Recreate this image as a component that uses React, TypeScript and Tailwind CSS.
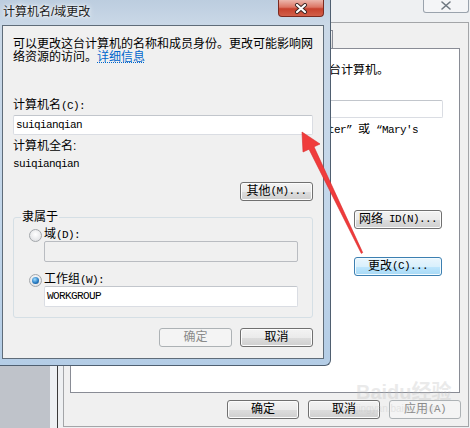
import React from 'react';

// latin runs in the dialog font look like SimSun half-width glyphs (6px per char)
const M = ({ children }: { children: React.ReactNode }) => (
    <span className="font-['Liberation_Mono',monospace] text-[11px] tracking-[-0.6px]">{children}</span>
);

type BtnProps = { children?: React.ReactNode; className?: string; kind?: 'normal' | 'disabled' | 'hot' };

const Btn = ({ children, className = '', kind = 'normal' }: BtnProps) => {
    const look =
        kind === 'disabled'
            ? 'border-[#adb2b5] bg-[#f4f4f4] text-[#8a8a8a]'
            : kind === 'hot'
            ? 'border-[#3c7fb1] bg-[linear-gradient(#eaf6fd_0%,#d9f0fc_50%,#bee6fd_51%,#a7d9f5_100%)] shadow-[inset_0_0_0_1px_#f2fbff] text-black'
            : 'border-[#707070] bg-[linear-gradient(#f3f3f3_0%,#ebebeb_50%,#dddddd_51%,#cfcfcf_100%)] shadow-[inset_0_0_0_1px_#fcfcfc] text-black';
    return (
        <div className={`flex h-[19px] items-center justify-center whitespace-nowrap rounded-[3px] border text-[12px] leading-[13px] ${look} ${className}`}>
            {children}
        </div>
    );
};

const Field = ({ children, className = '', disabled }: { children?: React.ReactNode; className?: string; disabled?: boolean }) => (
    <div
        className={`flex items-center rounded-[2px] border px-[2px] ${
            disabled ? 'border-[#b9bcc1] bg-[#f0f0f0]' : 'border-[#dadde3] border-t-[#c2c6cc] bg-white'
        } ${className}`}
    >
        {children}
    </div>
);

const Radio = ({ checked }: { checked?: boolean }) => (
    <span className="flex h-[13px] w-[13px] shrink-0 items-center justify-center rounded-full border border-[#a3a7ab] bg-[radial-gradient(circle_at_50%_40%,#ffffff,#d9dbde)]">
        {checked && (
            <span className="h-[7px] w-[7px] rounded-full bg-[radial-gradient(circle_at_40%_35%,#9fdcff,#2a7ec4_55%,#0c3f78)]" />
        )}
    </span>
);

const CloseX = ({ dark }: { dark?: boolean }) => (
    <svg width="14" height="11" viewBox="0 0 14 11">
        <path d="M3 2 L11 9 M11 2 L3 9" stroke={dark ? '#6e7780' : '#3a2522'} strokeWidth={dark ? 1.6 : 4} strokeLinecap="round" />
        {!dark && <path d="M3 2 L11 9 M11 2 L3 9" stroke="#ffffff" strokeWidth="2.2" strokeLinecap="round" />}
    </svg>
);

const Tab = ({ className = '' }: { className?: string }) => (
    <div className={`h-[18px] border border-b-0 border-l-0 border-[#898c95] bg-[linear-gradient(#f2f2f2,#dcdcdc)] ${className}`} />
);

const BackWindow = () => (
    <div className="absolute left-[50px] top-0 h-[428px] w-[430px] bg-[#edf0f3] pl-[7px]">
        <div className="flex h-full flex-col border-l border-[#3a3a3a] bg-[#eef0f2] pl-[5px]">
            {/* title strip, mostly off-screen */}
            <div className="flex h-[22px] w-[406px] justify-end">
                <div className="flex h-[13px] w-[46px] items-end justify-center overflow-hidden rounded-b-[3px] border border-t-0 border-[#9aa3ad] bg-[#f4f5f7]">
                    <div className="mb-[1px]">
                        <CloseX dark />
                    </div>
                </div>
            </div>

            <div className="flex h-[405px] w-[406px] flex-col border border-[#a3a5a8] bg-[#f0f0f0]">
                {/* tab strip, hidden behind the front dialog except its right edge */}
                <div className="ml-[6px] flex h-[25px] items-end">
                    <div className="-mb-px h-[20px] w-[64px] border border-b-0 border-[#898c95] bg-white" />
                    <Tab className="w-[44px]" />
                    <Tab className="w-[44px]" />
                    <Tab className="w-[64px]" />
                    <Tab className="w-[47px]" />
                </div>

                <div className="ml-[6px] flex h-[345px] w-[390px] flex-col border border-[#898c95] bg-white">
                    <div className="ml-[245px] mt-[15px] flex h-[13px] w-[73px] justify-end overflow-hidden whitespace-nowrap">
                        <span className="shrink-0">这台计算机。</span>
                    </div>
                    <Field className="mr-[16px] mt-[23px] h-[18px] w-[260px] self-end" />
                    <div className="ml-[257px] mt-[5px] flex h-[13px] w-[90px] justify-end overflow-hidden whitespace-nowrap">
                        <span className="shrink-0">
                            <M>ter” </M>或<M> “Mary's</M>
                        </span>
                    </div>
                    <Btn className="mr-[17px] mt-[74px] w-[88px] self-end">
                        网络<M>{'\u00a0'}ID(N)...</M>
                    </Btn>
                    <Btn kind="hot" className="mr-[17px] mt-[28px] w-[88px] self-end">
                        更改<M>(C)...</M>
                    </Btn>
                </div>

                <div className="mt-[7px] flex justify-end gap-[9px] pr-[7px]">
                    <Btn className="w-[72px]">确定</Btn>
                    <Btn className="w-[72px]">取消</Btn>
                    <Btn kind="disabled" className="w-[72px]">
                        应用<M>(A)</M>
                    </Btn>
                </div>
            </div>
        </div>
    </div>
);

const NameDialog = () => (
    <div className="absolute left-[-5px] top-0 flex h-[366px] w-[336px] flex-col rounded-br-[6px] border-b border-r border-[#4f5f70] bg-[linear-gradient(180deg,#bccddf_0%,#cad8e7_25px,#c2d6ea_60%,#b4cde6_100%)] pb-[6px] pl-[7px] pr-[6px]">
        <div className="flex h-[25px] items-start justify-between">
            <div className="ml-[1px] mt-[5px] text-[12px] leading-[14px] text-[#1b1b1b] [text-shadow:0_0_6px_#ffffff,0_0_3px_#ffffff]">
                计算机名/域更改
            </div>
            <div className="flex h-[17px] w-[46px] items-center justify-center rounded-b-[4px] border border-t-0 border-[#7b2a20] bg-[linear-gradient(#ecb6ac,#dc7564_45%,#c7412d_55%,#d25f49)]">
                <CloseX />
            </div>
        </div>

        <div className="flex h-[334px] flex-col border border-[#5f6c79] bg-[#f0f0f0] px-[10px] pt-[12px]">
            <div className="whitespace-nowrap">可以更改这台计算机的名称和成员身份。更改可能影响网</div>
            <div className="whitespace-nowrap">
                络资源的访问。<span className="text-[#0066cc] underline decoration-dotted">详细信息</span>
            </div>

            <div className="mt-[35px]">
                计算机名<M>(C):</M>
            </div>
            <Field className="mt-[2px] h-[20px] w-[300px]">
                <M>suiqianqian</M>
            </Field>

            <div className="mt-[5px]">计算机全名:</div>
            <div className="mt-[4px] h-[13px]">
                <M>suiqianqian</M>
            </div>

            <Btn className="mt-[12px] w-[73px] self-end">
                其他<M>(M)...</M>
            </Btn>

            <fieldset className="mt-[10px] rounded-[3px] border border-[#d5dfe5] pb-[10px]">
                <legend className="ml-[7px] px-[1px] leading-[13px]">隶属于</legend>
                <div className="ml-[15px] mt-[5px] flex h-[12px] items-center gap-[2px]">
                    <Radio />
                    <span>
                        域<M>(D):</M>
                    </span>
                </div>
                <Field disabled className="ml-[30px] h-[21px] w-[254px]" />
                <div className="ml-[15px] mt-[12px] flex h-[12px] items-center gap-[2px]">
                    <Radio checked />
                    <span>
                        工作组<M>(W):</M>
                    </span>
                </div>
                <Field className="ml-[30px] h-[21px] w-[254px]">
                    <M>WORKGROUP</M>
                </Field>
            </fieldset>

            <div className="mt-[10px] flex justify-end gap-[8px]">
                <Btn kind="disabled" className="w-[73px]">确定</Btn>
                <Btn className="w-[73px]">取消</Btn>
            </div>
        </div>
    </div>
);

export default function App() {
    return (
        <div className="relative h-[428px] w-[470px] overflow-hidden bg-[#bfc3ca] font-['Liberation_Sans','Noto_Sans_CJK_SC',sans-serif] text-[12px] leading-[13px] text-black">
            <BackWindow />
            <NameDialog />

            {/* red arrow annotation */}
            <svg className="pointer-events-none absolute left-0 top-0" width="470" height="428" viewBox="0 0 470 428">
                <polygon
                    points="302,132 320,144 314,146.8 362.7,252.6 361.3,253.4 309,149.2 303,152"
                    fill="#f03c3c"
                    stroke="#d92b2b"
                    strokeWidth="0.6"
                    strokeLinejoin="round"
                />
            </svg>

            {/* faint watermark */}
            <div className="pointer-events-none absolute left-[356px] top-[381px] flex flex-col items-start text-[#bdbdbd] opacity-30">
                <span className="text-[20px] font-bold leading-[22px]">Baidu经验</span>
                <span className="text-[10px] leading-[11px]">jingyan.baidu.com</span>
            </div>
        </div>
    );
}
